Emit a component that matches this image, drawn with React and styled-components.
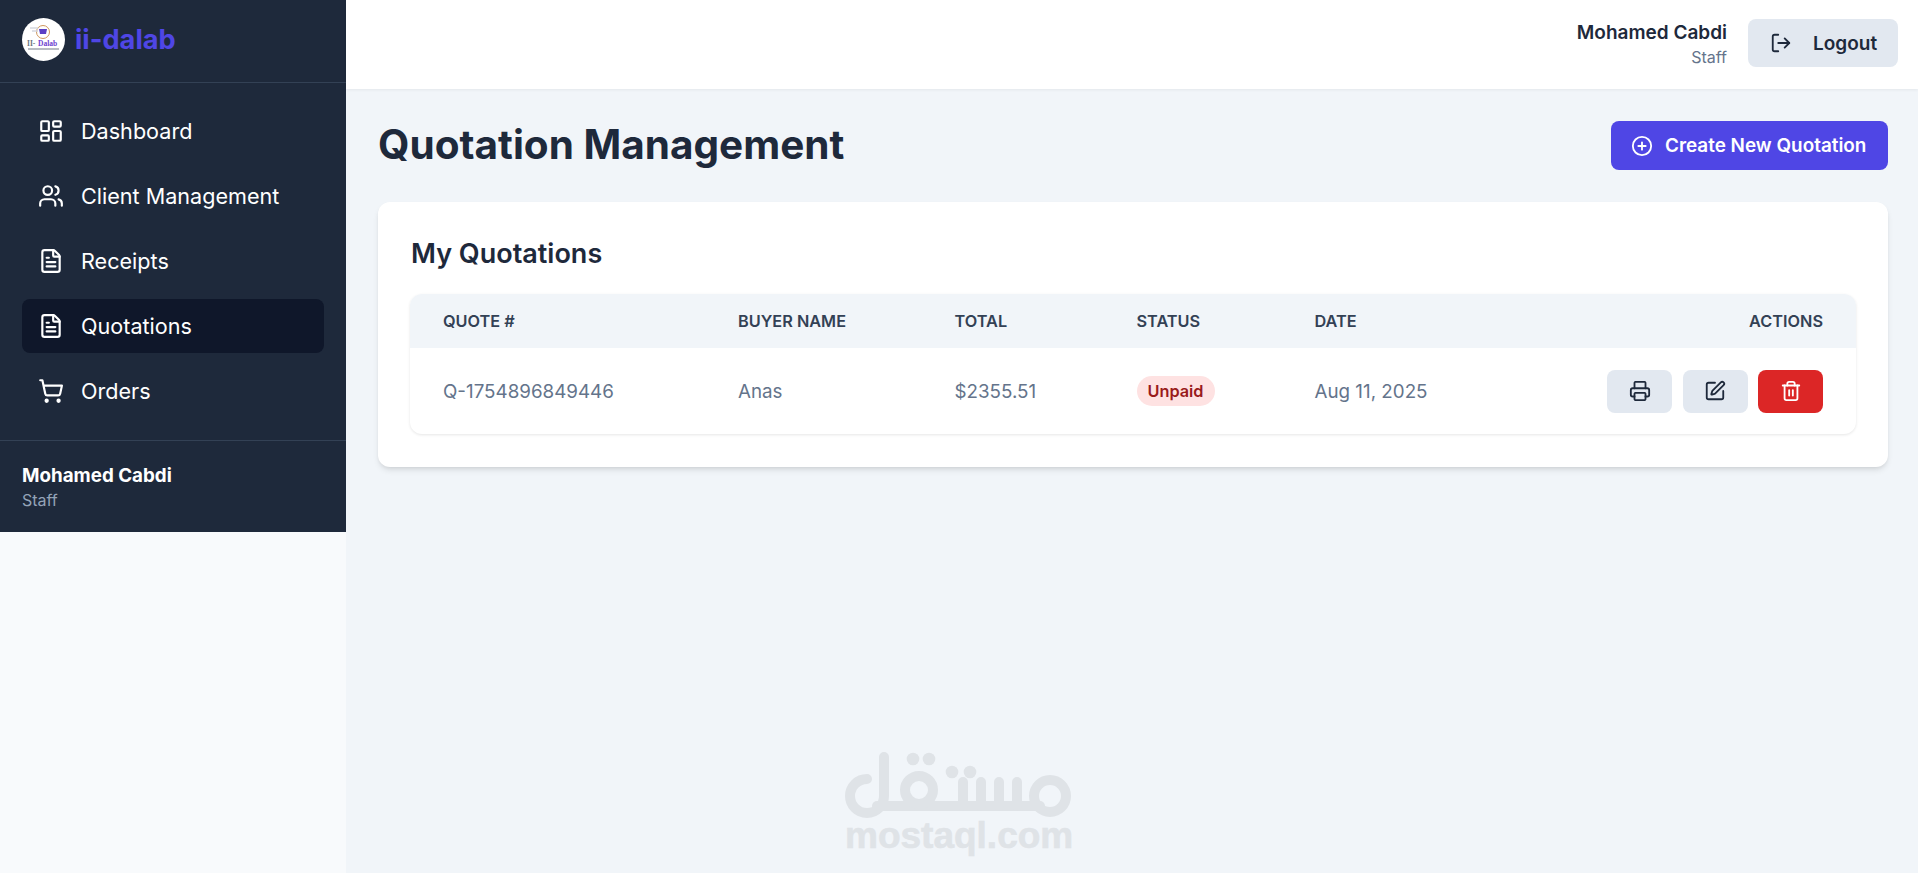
import React from 'react';
import styled, { createGlobalStyle } from 'styled-components';
import {
  LayoutDashboard, Users, FileText, ShoppingCart, LogOut, CirclePlus, Printer, SquarePen, Trash2,
} from 'lucide-react';

const navItems = [
  { label: 'Dashboard', icon: LayoutDashboard },
  { label: 'Client Management', icon: Users },
  { label: 'Receipts', icon: FileText },
  { label: 'Quotations', icon: FileText, active: true },
  { label: 'Orders', icon: ShoppingCart },
];

const columns = [
  { label: 'Quote #', width: 295 },
  { label: 'Buyer Name', width: 216.5 },
  { label: 'Total', width: 182 },
  { label: 'Status', width: 178 },
  { label: 'Date', width: 250 },
  { label: 'Actions', width: 324.5, right: true },
];

const App = function () {
  return (
    <Page>
      <GlobalStyle />
      <Sidebar>
        <Brand>
          <BrandLogo viewBox="0 0 43 43" aria-hidden="true">
            <circle cx="21.5" cy="21.5" r="21.5" fill="#ffffff" />
            <circle cx="21" cy="14" r="6.5" fill="none" stroke="#c98a4b" strokeWidth="0.9" />
            <path d="M17 11h8l-1 5h-6z" fill="#5b3fc4" />
            <path d="M8 10h8M10 13h6" stroke="#d5d8e0" strokeWidth="1.4" />
            <text x="5" y="28" fontFamily="'Liberation Serif', serif" fontSize="7.5" fontWeight="700" fill="#6b7280">II-</text>
            <text x="16" y="28" fontFamily="'Liberation Serif', serif" fontSize="7.5" fontWeight="700" fill="#6d3fd0">Dalab</text>
            <path d="M6 31h31" stroke="#9aa0aa" strokeWidth="1.4" />
          </BrandLogo>
          <BrandName>ii-dalab</BrandName>
        </Brand>
        <Nav>
          {navItems.map((item) => (
            <NavItem key={item.label} $active={item.active}>
              <item.icon size={26} strokeWidth={2} />
              {item.label}
            </NavItem>
          ))}
        </Nav>
        <SidebarUser>
          <SidebarName>Mohamed Cabdi</SidebarName>
          <SidebarRole>Staff</SidebarRole>
        </SidebarUser>
      </Sidebar>

      <Main>
        <Header>
          <UserBlock>
            <UserName>Mohamed Cabdi</UserName>
            <UserRole>Staff</UserRole>
          </UserBlock>
          <LogoutButton>
            <LogOut size={22} strokeWidth={2} />
            Logout
          </LogoutButton>
        </Header>

        <Content>
          <TitleRow>
            <Title>Quotation Management</Title>
            <CreateButton>
              <CirclePlus size={22} strokeWidth={2} />
              Create New Quotation
            </CreateButton>
          </TitleRow>

          <Card>
            <CardTitle>My Quotations</CardTitle>
            <TableWrap>
              <Table>
                <colgroup>
                  {columns.map((col) => <Col key={col.label} $width={col.width} />)}
                </colgroup>
                <thead>
                  <tr>
                    {columns.map((col) => (
                      <Th key={col.label} $right={col.right}>{col.label}</Th>
                    ))}
                  </tr>
                </thead>
                <tbody>
                  <tr>
                    <Td>Q-1754896849446</Td>
                    <Td>Anas</Td>
                    <Td>$2355.51</Td>
                    <Td><Badge>Unpaid</Badge></Td>
                    <Td>Aug 11, 2025</Td>
                    <Td>
                      <Actions>
                        <IconButton><Printer size={22} strokeWidth={2} /></IconButton>
                        <IconButton><SquarePen size={22} strokeWidth={2} /></IconButton>
                        <IconButton $danger><Trash2 size={22} strokeWidth={2} /></IconButton>
                      </Actions>
                    </Td>
                  </tr>
                </tbody>
              </Table>
            </TableWrap>
          </Card>
        </Content>
      </Main>

      <Watermark>
        <WatermarkLogo viewBox="0 0 228 68" aria-hidden="true">
          <g fill="none" stroke="#dfe3e7" strokeWidth="10" strokeLinecap="round">
            <path d="M39 5V44A17 17 0 1 1 22 27" />
            <path d="M32 54H195" />
            <circle cx="74" cy="38" r="14" />
            <path d="M118 30V54M136 30V54M154 30V54M172 30V54" />
            <circle cx="205" cy="44" r="16" />
          </g>
          <g fill="#dfe3e7">
            <circle cx="68" cy="7" r="6.3" />
            <circle cx="84" cy="7" r="6.3" />
            <circle cx="107" cy="20" r="6.3" />
            <circle cx="125" cy="20" r="6.3" />
          </g>
        </WatermarkLogo>
        <WatermarkText>mostaql.com</WatermarkText>
      </Watermark>
    </Page>
  );
};

export default App;

const GlobalStyle = createGlobalStyle`
  * {
    box-sizing: border-box;
  }

  html, body {
    margin: 0;
    padding: 0;
    background-color: #f8fafc;
    font-family: 'Inter', 'Liberation Sans', sans-serif;
  }
`;

const Page = styled.div`
  display: flex;
  align-items: flex-start;
  min-height: 100vh;
  position: relative;
  overflow: hidden;
`;

const Sidebar = styled.aside`
  width: 346px;
  flex-shrink: 0;
  background-color: #1e293b;
  color: #ffffff;
`;

const Brand = styled.div`
  height: 83px;
  padding: 0 22px 3px;
  display: flex;
  align-items: center;
  gap: 10px;
  border-bottom: 1px solid #334155;
`;

const BrandLogo = styled.svg`
  width: 43px;
  height: 43px;
  flex-shrink: 0;
`;

const BrandName = styled.span`
  font-size: 27.2px;
  font-weight: 700;
  color: #4f46e5;
`;

const Nav = styled.nav`
  height: 358px;
  padding: 21px 22px 0;
  display: flex;
  flex-direction: column;
  gap: 11px;
  border-bottom: 1px solid #334155;
`;

const NavItem = styled.a`
  height: 54px;
  padding: 0 16px;
  display: flex;
  align-items: center;
  gap: 17px;
  border-radius: 8px;
  font-size: 21.6px;
  font-weight: 400;
  color: #ffffff;
  background-color: ${(props) => (props.$active ? '#0f172a' : 'transparent')};
`;

const SidebarUser = styled.div`
  height: 91px;
  padding: 23px 22px 0;
`;

const SidebarName = styled.div`
  font-size: 18.8px;
  font-weight: 700;
  line-height: 24px;
`;

const SidebarRole = styled.div`
  font-size: 16px;
  line-height: 24px;
  color: #94a3b8;
`;

const Main = styled.main`
  flex: 1;
  min-height: 100vh;
  background-color: #f1f5f9;
`;

const Header = styled.header`
  height: 89px;
  padding: 0 20px 3px;
  display: flex;
  align-items: center;
  justify-content: flex-end;
  gap: 21px;
  background-color: #ffffff;
  box-shadow: 0 1px 3px rgba(0, 0, 0, 0.06);
`;

const UserBlock = styled.div`
  padding-top: 3px;
  text-align: right;
`;

const UserName = styled.div`
  font-size: 19px;
  font-weight: 600;
  line-height: 24px;
  color: #1e293b;
`;

const UserRole = styled.div`
  font-size: 16px;
  line-height: 24px;
  color: #64748b;
`;

const LogoutButton = styled.button`
  width: 150px;
  height: 48px;
  padding: 0 0 0 22px;
  border: 0;
  border-radius: 8px;
  display: flex;
  align-items: center;
  gap: 21px;
  background-color: #e2e8f0;
  color: #1e293b;
  font-family: inherit;
  font-size: 19px;
  font-weight: 600;
`;

const Content = styled.div`
  padding: 32px 30px 0 32px;
`;

const TitleRow = styled.div`
  display: flex;
  align-items: center;
  justify-content: space-between;
  margin-bottom: 32px;
`;

const Title = styled.h1`
  margin: 0;
  padding-bottom: 2px;
  font-size: 40.5px;
  font-weight: 700;
  line-height: 47px;
  color: #1e293b;
`;

const CreateButton = styled.button`
  width: 277px;
  height: 49px;
  padding: 0 0 0 20px;
  border: 0;
  border-radius: 8px;
  display: flex;
  align-items: center;
  gap: 12px;
  background-color: #4f46e5;
  color: #ffffff;
  font-family: inherit;
  font-size: 18.9px;
  font-weight: 600;
`;

const Card = styled.section`
  background-color: #ffffff;
  border-radius: 12px;
  padding: 33px 32px 33px;
  box-shadow: 0 4px 6px -1px rgba(0, 0, 0, 0.1), 0 2px 4px -2px rgba(0, 0, 0, 0.1);
`;

const CardTitle = styled.h2`
  margin: 0 0 22px;
  padding-left: 1px;
  font-size: 27px;
  font-weight: 600;
  line-height: 37px;
  color: #1e293b;
`;

const TableWrap = styled.div`
  border-radius: 12px;
  overflow: hidden;
  box-shadow: 0 1px 3px rgba(0, 0, 0, 0.1);
`;

const Table = styled.table`
  width: 100%;
  table-layout: fixed;
  border-collapse: collapse;
`;

const Col = styled.col`
  width: ${(props) => props.$width}px;
`;

const Th = styled.th`
  height: 54px;
  padding: 0 33px;
  background-color: #f1f5f9;
  font-size: 16.3px;
  font-weight: 600;
  text-transform: uppercase;
  color: #334155;
  text-align: ${(props) => (props.$right ? 'right' : 'left')};
`;

const Td = styled.td`
  height: 86px;
  padding: 0 33px;
  font-size: 18.8px;
  color: #64748b;
  white-space: nowrap;
`;

const Badge = styled.span`
  display: inline-block;
  vertical-align: middle;
  padding: 0 11px;
  border-radius: 15px;
  line-height: 30px;
  font-size: 16.3px;
  font-weight: 600;
  color: #991b1b;
  background-color: #fee2e2;
`;

const Actions = styled.div`
  display: flex;
  justify-content: flex-end;
  gap: 10.5px;
`;

const IconButton = styled.button`
  width: 65px;
  height: 43px;
  border: 0;
  border-radius: 8px;
  display: flex;
  align-items: center;
  justify-content: center;
  background-color: ${(props) => (props.$danger ? '#dc2626' : '#e2e8f0')};
  color: ${(props) => (props.$danger ? '#ffffff' : '#1e293b')};
`;

const Watermark = styled.div`
  position: absolute;
  left: 845px;
  top: 752px;
  width: 228px;
  text-align: center;
  pointer-events: none;
`;

const WatermarkLogo = styled.svg`
  display: block;
  width: 228px;
  height: 68px;
`;

const WatermarkText = styled.div`
  font-family: 'Liberation Sans', sans-serif;
  font-size: 37px;
  font-weight: 700;
  line-height: 31px;
  color: #dfe3e7;
  -webkit-text-stroke: 0.6px #dfe3e7;
`;
